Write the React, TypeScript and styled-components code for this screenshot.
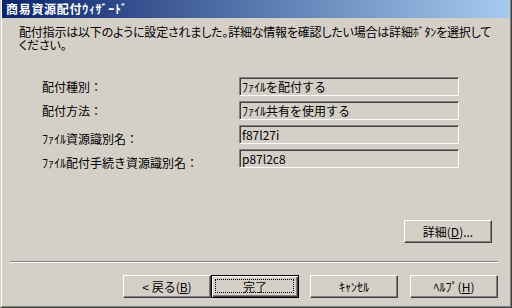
import React from "react";
import styled, { createGlobalStyle } from "styled-components";

const Global = createGlobalStyle`
  html, body { margin: 0; padding: 0; background: #d4d0c8; overflow: hidden; }
  * { box-sizing: border-box; }
`;

const FONT = `"MS UI Gothic", "Noto Sans CJK JP", "Noto Sans", sans-serif`;

const Window = styled.div`
  width: 512px;
  height: 308px;
  background: #d4d0c8;
  border-left: 1px solid #d4d0c8;
  border-right: 1px solid #404040;
  border-bottom: 1px solid #404040;
  font-family: ${FONT};
  font-size: 12px;
  color: #000;
`;

const Frame = styled.div`
  height: 100%;
  border-left: 1px solid #ffffff;
  border-right: 1px solid #808080;
  border-bottom: 1px solid #808080;
  display: flex;
  flex-direction: column;
`;

const TitleBar = styled.div`
  height: 18px;
  background: linear-gradient(to right, #0a246a, #a6caf0);
  color: #fff;
  font-weight: bold;
  font-size: 12px;
  line-height: 18px;
  letter-spacing: 0.7px;
  padding-left: 4px;
  white-space: nowrap;
`;

const Body = styled.div`
  flex: 1;
  display: flex;
  flex-direction: column;
`;

const Intro = styled.p`
  margin: 7px 0 0 17px;
  line-height: 13px;
  letter-spacing: -0.2px;
  white-space: nowrap;
  font-feature-settings: "palt";
`;

const InfoGrid = styled.div`
  margin: 26px 0 0 40px;
  display: grid;
  grid-template-columns: 197px 220px;
  grid-auto-rows: 19px;
  row-gap: 5px;
`;

const Label = styled.div<{ $shift?: number }>`
  line-height: 19px;
  padding-top: ${(p) => p.$shift ?? 0}px;
  white-space: nowrap;
`;

const Field = styled.div`
  border: 1px solid;
  border-color: #808080 #ffffff #ffffff #808080;
  box-shadow: inset 1px 1px #404040, inset -1px -1px #d4d0c8;
  background: #d4d0c8;
  padding-left: 2px;
  line-height: 17px;
  white-space: nowrap;
  overflow: hidden;
`;

const DetailRow = styled.div`
  margin: 52px 18px 0 0;
  display: flex;
  justify-content: flex-end;
`;

const Button = styled.button<{ $default?: boolean }>`
  width: 88px;
  height: 23px;
  padding: 0;
  font-family: ${FONT};
  font-size: 12px;
  color: #000;
  background: #d4d0c8;
  border: 1px solid;
  border-color: #ffffff #404040 #404040 #ffffff;
  box-shadow: inset -1px -1px #808080;
  position: relative;
  line-height: 19px;
  white-space: pre;
  ${(p) =>
    p.$default &&
    `
    border-color: #000;
    box-shadow: inset 1px 1px #ffffff, inset -1px -1px #404040, inset -2px -2px #808080;
  `}
`;

const FocusRect = styled.span`
  position: absolute;
  inset: 3px 4px 4px 3px;
  border: 1px dotted #000;
  pointer-events: none;
`;

const Separator = styled.div`
  margin: 18px 12px 0 8px;
  height: 2px;
  border-top: 1px solid #808080;
  border-bottom: 1px solid #ffffff;
`;

const ButtonRow = styled.div`
  margin: 12px 12px 0 0;
  display: flex;
  justify-content: flex-end;
`;

const Gap = styled.div<{ $w: number }>`
  width: ${(p) => p.$w}px;
`;

const rows = [
  { label: "配付種別：", value: "ﾌｧｲﾙを配付する", shift: 0 },
  { label: "配付方法：", value: "ﾌｧｲﾙ共有を使用する", shift: 0 },
  { label: "ﾌｧｲﾙ資源識別名：", value: "f87l27i", shift: 4 },
  { label: "ﾌｧｲﾙ配付手続き資源識別名：", value: "p87l2c8", shift: 4 },
];

export default function App() {
  return (
    <>
      <Global />
      <Window>
        <Frame>
          <TitleBar>商易資源配付ｳｨｻﾞｰﾄﾞ</TitleBar>
          <Body>
            <Intro>
              配付指示は以下のように設定されました。詳細な情報を確認したい場合は詳細ﾎﾞﾀﾝを選択して
              <br />
              ください。
            </Intro>
            <InfoGrid>
              {rows.map((r) => (
                <React.Fragment key={r.label}>
                  <Label $shift={r.shift}>{r.label}</Label>
                  <Field>{r.value}</Field>
                </React.Fragment>
              ))}
            </InfoGrid>
            <DetailRow>
              <Button>
                詳細(<u>D</u>)...
              </Button>
            </DetailRow>
            <Separator />
            <ButtonRow>
              <Button>
                {"< 戻る("}
                <u>B</u>)
              </Button>
              <Button $default>
                完了
                <FocusRect />
              </Button>
              <Gap $w={11} />
              <Button>ｷｬﾝｾﾙ</Button>
              <Gap $w={12} />
              <Button>
                ﾍﾙﾌﾟ(<u>H</u>)
              </Button>
            </ButtonRow>
          </Body>
        </Frame>
      </Window>
    </>
  );
}
